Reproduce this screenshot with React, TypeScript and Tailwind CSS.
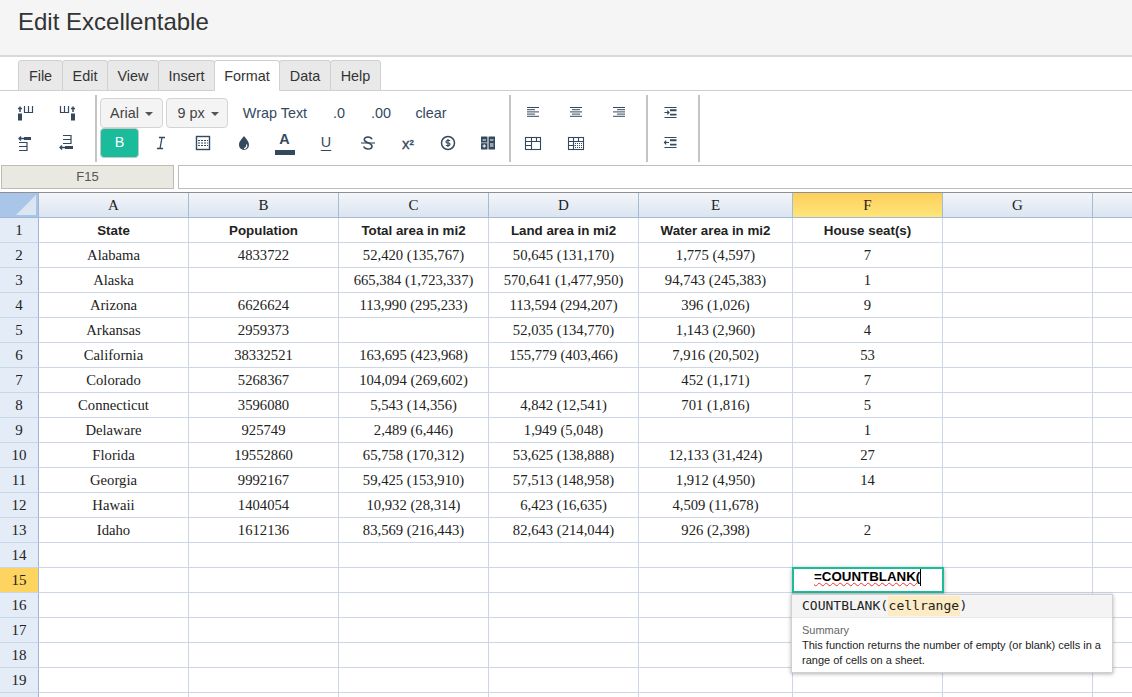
import React from 'react';

const MENUS = ['File', 'Edit', 'View', 'Insert', 'Format', 'Data', 'Help'];
const MENU_WIDTHS = ['w-[45px]', 'w-[46px]', 'w-[52px]', 'w-[57px]', 'w-[66px]', 'w-[52px]', 'w-[51px]'];

const COLUMNS = [
  { name: 'A', width: 'w-[150px]' },
  { name: 'B', width: 'w-[150px]' },
  { name: 'C', width: 'w-[150px]' },
  { name: 'D', width: 'w-[150px]' },
  { name: 'E', width: 'w-[154px]' },
  { name: 'F', width: 'w-[150px]' },
  { name: 'G', width: 'w-[150px]' },
  { name: '', width: 'w-[150px]' },
];

const ROWS: string[][] = [
  ['State', 'Population', 'Total area in mi2', 'Land area in mi2', 'Water area in mi2', 'House seat(s)'],
  ['Alabama', '4833722', '52,420 (135,767)', '50,645 (131,170)', '1,775 (4,597)', '7'],
  ['Alaska', '', '665,384 (1,723,337)', '570,641 (1,477,950)', '94,743 (245,383)', '1'],
  ['Arizona', '6626624', '113,990 (295,233)', '113,594 (294,207)', '396 (1,026)', '9'],
  ['Arkansas', '2959373', '', '52,035 (134,770)', '1,143 (2,960)', '4'],
  ['California', '38332521', '163,695 (423,968)', '155,779 (403,466)', '7,916 (20,502)', '53'],
  ['Colorado', '5268367', '104,094 (269,602)', '', '452 (1,171)', '7'],
  ['Connecticut', '3596080', '5,543 (14,356)', '4,842 (12,541)', '701 (1,816)', '5'],
  ['Delaware', '925749', '2,489 (6,446)', '1,949 (5,048)', '', '1'],
  ['Florida', '19552860', '65,758 (170,312)', '53,625 (138,888)', '12,133 (31,424)', '27'],
  ['Georgia', '9992167', '59,425 (153,910)', '57,513 (148,958)', '1,912 (4,950)', '14'],
  ['Hawaii', '1404054', '10,932 (28,314)', '6,423 (16,635)', '4,509 (11,678)', ''],
  ['Idaho', '1612136', '83,569 (216,443)', '82,643 (214,044)', '926 (2,398)', '2'],
  [],
  [],
  [],
  [],
  [],
  [],
  [],
];

const Ico: React.FC<{ children: React.ReactNode }> = ({ children }) => (
  <svg width="18" height="18" viewBox="0 0 18 18" fill="none" stroke="#34495e" strokeWidth="1">
    {children}
  </svg>
);

const ToolBtn: React.FC<{ children: React.ReactNode; w?: string }> = ({ children, w = 'w-[41px]' }) => (
  <button className={`${w} h-[30px] flex items-center justify-center shrink-0`}>{children}</button>
);

const Icons = {
  colBefore: (
    <Ico>
      <path d="M7.500 2v7M11.500 2v7M15.500 2v7M7 8.500h9" strokeWidth="1.200" />
      <path d="M3 8V2.500M1 4.500h4" strokeWidth="1.500" />
      <rect x="1" y="9.500" width="4" height="7" fill="#34495e" stroke="none" />
    </Ico>
  ),
  colAfter: (
    <Ico>
      <path d="M2.500 2v7M6.500 2v7M10.500 2v7M2 8.500h9" strokeWidth="1.200" />
      <path d="M15 8V2.500M13 4.500h4" strokeWidth="1.500" />
      <rect x="13" y="9.500" width="4" height="7" fill="#34495e" stroke="none" />
    </Ico>
  ),
  rowAbove: (
    <Ico>
      <path d="M2 8.500h8M2 12.500h8M2 16.500h8M10 8v9" strokeWidth="1.200" />
      <path d="M2 4.500h5M4 2.500l-2 2 2 2" strokeWidth="1.300" />
      <rect x="7" y="3" width="7" height="3" fill="#34495e" stroke="none" />
    </Ico>
  ),
  rowBelow: (
    <Ico>
      <path d="M5 1.500h8M5 5.500h8M5 9.500h8M13 1v9" strokeWidth="1.200" />
      <path d="M2 13.500h5M4 11.500l-2 2 2 2" strokeWidth="1.300" />
      <rect x="7" y="12" width="8" height="3" fill="#34495e" stroke="none" />
    </Ico>
  ),
  italic: (
    <Ico>
      <path d="M7 3.500h6M5 14.500h6M10 3.500l-2 11" strokeWidth="1.300" />
    </Ico>
  ),
  borders: (
    <Ico>
      <rect x="2.500" y="2.500" width="13" height="13" strokeWidth="1.400" />
      <path d="M4 6.500h10M4 9h10M4 11.500h10" strokeDasharray="2 1" strokeWidth="1.200" />
    </Ico>
  ),
  drop: (
    <Ico>
      <path d="M9 2c2 3 5 5 5 9a5 5 0 0 1-10 0c0-4 3-6 5-9z" fill="#34495e" stroke="none" />
      <path d="M11.500 10.500a2.800 2.800 0 0 1-2.500 4" stroke="#fff" strokeWidth="1.200" />
    </Ico>
  ),
  strike: (
    <Ico>
      <path d="M13 5.300C12.300 3.700 10.800 3 9 3 7 3 5.300 4 5.300 5.700 5.300 9 13 8.500 13 12.200 13 14 11.200 15 9 15c-2 0-3.500-.8-4.300-2.500" strokeWidth="1.600" />
      <path d="M2 9h14" strokeWidth="1.100" />
    </Ico>
  ),
  dollar: (
    <Ico>
      <circle cx="9" cy="9" r="6.500" strokeWidth="1.500" />
      <path d="M11.200 6.500H8a1.300 1.300 0 0 0 0 2.500h2a1.300 1.300 0 0 1 0 2.500H6.800M9 5v8" strokeWidth="1.200" />
    </Ico>
  ),
  calc: (
    <Ico>
      <rect x="2" y="2.500" width="6.500" height="13" rx="0.500" fill="#34495e" stroke="none" />
      <rect x="9.500" y="2.500" width="6.500" height="13" rx="0.500" fill="#34495e" stroke="none" />
      <path d="M3.500 6h3.500M11 6h3.500M11 10h3.500M11 12h3.500M3.500 12h3.500M5.200 10.300v3.400" stroke="#fff" strokeWidth="1" />
      <path d="M2 8.800h6.500" stroke="#fff" strokeWidth="0.600" />
    </Ico>
  ),
  alignLeft: (
    <Ico>
      <path d="M3 3.500h12M3 5.700h8M3 7.900h12M3 10.100h8M3 12.300h12" strokeWidth="1" />
    </Ico>
  ),
  alignCenter: (
    <Ico>
      <path d="M3 3.500h12M5 5.700h8M3 7.900h12M5 10.100h8M3 12.300h12" strokeWidth="1" />
    </Ico>
  ),
  alignRight: (
    <Ico>
      <path d="M3 3.500h12M7 5.700h8M3 7.900h12M7 10.100h8M3 12.300h12" strokeWidth="1" />
    </Ico>
  ),
  merge: (
    <Ico>
      <rect x="1.500" y="3.500" width="15" height="12" strokeWidth="1.100" />
      <path d="M1.500 7.500h15M1.500 11.500h6M7.500 3.500v12M12.500 3.500v4" strokeWidth="1.100" />
    </Ico>
  ),
  split: (
    <Ico>
      <rect x="1.500" y="3.500" width="15" height="12" strokeWidth="1.100" />
      <path d="M1.500 7.500h15M1.500 11.500h6M6.500 3.500v12M11.500 3.500v4" strokeWidth="1.100" />
      <path d="M8 9.500h7M8 11.500h7M8 13.500h7" strokeDasharray="1 1" strokeWidth="1" />
    </Ico>
  ),
  indent: (
    <Ico>
      <path d="M3.500 3.500h12M3.500 13.500h12" strokeWidth="1.200" />
      <path d="M3.500 8.500h4.500M6.300 6.700L8 8.500l-1.700 1.800" strokeWidth="1.200" />
      <path d="M9 6.200h6.500M9 10.600h6.500" strokeWidth="1.900" />
    </Ico>
  ),
  outdent: (
    <Ico>
      <path d="M3.500 3.500h12M3.500 13.500h12" strokeWidth="1.200" />
      <path d="M3.500 8.500h4.500M5.200 6.700L3.500 8.500l1.700 1.800" strokeWidth="1.200" />
      <path d="M9 6.200h6.500M9 10.600h6.500" strokeWidth="1.900" />
    </Ico>
  ),
};

const Caret = () => (
  <span className="inline-block ml-[6px] w-0 h-0 border-x-[4px] border-x-transparent border-t-[4px] border-t-[#555]" />
);

const Divider = () => <div className="w-[2px] h-[67px] mt-[4px] bg-[#c4c4c4] shrink-0" />;

const TextBtn: React.FC<{ label: string; w: string }> = ({ label, w }) => (
  <button className={`${w} h-[30px] pt-[2px] flex items-center justify-center text-[14.4px] text-[#34495e] shrink-0`}>{label}</button>
);

const App: React.FC = () => {
  return (
    <div className="w-[1132px] h-[697px] overflow-hidden bg-white font-['Liberation_Sans',Arial,sans-serif]">
      {/* page title */}
      <div className="h-[57px] bg-[#f5f5f5] border-b-2 border-[#d9d9d9] pl-[18px] pt-[7px]">
        <h1 className="text-[24px] leading-[30px] text-[#333]">Edit Excellentable</h1>
      </div>

      {/* menu tabs */}
      <div className="h-[34px] pt-[3px] pl-[18px] flex border-b border-[#cfcfcf]">
        {MENUS.map((m, i) => (
          <div
            key={m}
            className={`${MENU_WIDTHS[i]} h-[31px] pt-[2px] flex items-center justify-center text-[14.4px] text-[#333] border border-[#d0d0d0] rounded-t-[3px] -mr-[1px] ${
              m === 'Format' ? 'bg-white border-b-white z-10' : 'bg-[#e9e9e9]'
            }`}
          >
            {m}
          </div>
        ))}
      </div>

      {/* toolbar */}
      <div className="h-[71px] flex items-start pl-[5px]">
        <div className="w-[90px] mt-[7px] flex flex-wrap">
          <ToolBtn>{Icons.colBefore}</ToolBtn>
          <ToolBtn>{Icons.colAfter}</ToolBtn>
          <ToolBtn>{Icons.rowAbove}</ToolBtn>
          <ToolBtn>{Icons.rowBelow}</ToolBtn>
        </div>
        <Divider />
        <div className="w-[412px] mt-[7px] pl-[3px] flex flex-col">
          <div className="flex items-center h-[30px]">
            <button className="w-[63px] h-[30px] pt-[2px] flex items-center justify-center text-[14.4px] text-[#444] bg-[#f4f4f4] border border-[#d4d4d4] rounded-[4px]">
              Arial
              <Caret />
            </button>
            <button className="ml-[3px] w-[62px] h-[30px] pt-[2px] pl-[2px] flex items-center justify-center text-[14.4px] text-[#444] bg-[#f4f4f4] border border-[#d4d4d4] rounded-[4px]">
              9 px
              <Caret />
            </button>
            <TextBtn label="Wrap Text" w="w-[94px]" />
            <TextBtn label=".0" w="w-[34px]" />
            <TextBtn label=".00" w="w-[50px]" />
            <TextBtn label="clear" w="w-[50px]" />
          </div>
          <div className="flex items-center h-[30px]">
            <button className="w-[39px] h-[30px] flex items-center justify-center bg-[#1abc9c] border border-[#c8c8c8] rounded-[4px] text-white text-[14.4px]">
              B
            </button>
            <ToolBtn w="w-[43px]">{Icons.italic}</ToolBtn>
            <ToolBtn>{Icons.borders}</ToolBtn>
            <ToolBtn>{Icons.drop}</ToolBtn>
            <div className="w-[41px] h-[30px] flex flex-col items-center shrink-0">
              <span className="text-[14.4px] leading-[16px] mt-[3px] font-bold text-[#34495e]">A</span>
              <span className="w-[20px] h-[5px] bg-[#34495e] mt-[3px]" />
            </div>
            <ToolBtn w="w-[42px]">
              <span className="text-[14.4px] underline underline-offset-[3px] text-[#34495e]">U</span>
            </ToolBtn>
            <ToolBtn>{Icons.strike}</ToolBtn>
            <ToolBtn w="w-[40px]">
              <span className="text-[15px] text-[#34495e] leading-none [-webkit-text-stroke:0.3px_#34495e]">
                x<sup className="text-[8px] font-bold">2</sup>
              </span>
            </ToolBtn>
            <ToolBtn w="w-[40px]">{Icons.dollar}</ToolBtn>
            <ToolBtn w="w-[40px]">{Icons.calc}</ToolBtn>
          </div>
        </div>
        <Divider />
        <div className="w-[135px] mt-[7px] flex flex-wrap">
          <ToolBtn w="w-[43px]">{Icons.alignLeft}</ToolBtn>
          <ToolBtn w="w-[43px]">{Icons.alignCenter}</ToolBtn>
          <ToolBtn w="w-[43px]">{Icons.alignRight}</ToolBtn>
          <ToolBtn w="w-[43px]">{Icons.merge}</ToolBtn>
          <ToolBtn w="w-[43px]">{Icons.split}</ToolBtn>
        </div>
        <Divider />
        <div className="w-[50px] mt-[7px] pl-[1px] flex flex-col">
          <ToolBtn>{Icons.indent}</ToolBtn>
          <ToolBtn>{Icons.outdent}</ToolBtn>
        </div>
        <Divider />
      </div>

      {/* name box and formula bar */}
      <div className="h-[30px] pt-[3px] pl-[1px] flex overflow-hidden">
        <div className="w-[173px] h-[24px] shrink-0 bg-[#e9e9e1] border border-[#bdbdb5] flex items-center justify-center text-[13px] text-[#555]">
          F15
        </div>
        <div className="ml-[4px] w-[1000px] h-[24px] shrink-0 bg-white border border-[#bdbdbd]" />
      </div>

      {/* sheet */}
      <div className="relative border-t border-[#8f8f8f] font-['Liberation_Serif',serif]">
        <div className="flex h-[25px]">
          <div className="w-[39px] shrink-0 bg-[#a9c5e8] border-r border-b border-[#9db7d4] relative overflow-hidden">
            <div className="absolute right-[2px] bottom-[2px] w-0 h-0 border-l-[20px] border-l-transparent border-b-[20px] border-b-[#dce6f3]" />
          </div>
          {COLUMNS.map((c) => (
            <div
              key={c.name}
              className={`${c.width} shrink-0 flex items-center justify-center text-[15px] text-[#222] border-r border-b border-[#a3bbd6] ${
                c.name === 'F'
                  ? 'bg-gradient-to-b from-[#fdcf5a] to-[#ffe57a]'
                  : 'bg-gradient-to-b from-[#f3f6fa] to-[#dbe4f0]'
              }`}
            >
              {c.name}
            </div>
          ))}
        </div>
        {ROWS.map((row, r) => (
          <div key={r} className="flex h-[25px]">
            <div
              className={`w-[39px] shrink-0 flex items-center justify-center text-[15px] text-[#222] border-r border-b border-r-[#9db7d4] border-b-[#c9d6e6] ${
                r === 14 ? 'bg-[#fdd45f]' : 'bg-[#e4ecf7]'
              } ${r === 0 ? 'pt-[1px]' : ''}`}
            >
              {r < 19 ? r + 1 : ''}
            </div>
            {COLUMNS.map((c, i) => (
              <div
                key={c.name}
                className={`${c.width} shrink-0 flex items-center justify-center border-r border-b border-[#ccd6e6] text-[#222] whitespace-nowrap ${
                  r === 0 ? "pt-[1px] font-['Liberation_Sans',Arial,sans-serif] font-bold text-[13.33px]" : 'text-[14.67px]'
                }`}
              >
                {row[i]}
              </div>
            ))}
          </div>
        ))}

        {/* cell editor */}
        <div className="absolute left-[792px] top-[374px] w-[152px] h-[26px] bg-white border-[2px] border-[#1abc9c] shadow-[0_1px_4px_rgba(0,0,0,0.35)] flex items-start pl-[20px] font-['Liberation_Sans',Arial,sans-serif] font-bold text-[13.33px] leading-[16px] text-black z-10">
          <span className="underline decoration-wavy decoration-[#e33] decoration-1">=COUNTBLANK(</span>
          <span className="w-[1px] h-[17px] bg-black" />
        </div>

        {/* function hint */}
        <div className="absolute left-[791px] top-[401px] w-[322px] h-[79px] bg-white border border-[#d0d0d0] shadow-[0_1px_4px_rgba(0,0,0,0.3)] z-10 font-['Liberation_Sans',Arial,sans-serif]">
          <div className="h-[23px] bg-[#f4f4f4] border-b border-[#e8e8e8] pl-[10px] flex items-center font-['DejaVu_Sans_Mono',monospace] text-[13px] text-[#222]">
            COUNTBLANK(<span className="bg-[#fdebc4] px-[0.5px]">cellrange</span>)
          </div>
          <div className="pl-[10px] pr-[8px] pt-[5px] text-[11px] leading-[15px]">
            <div className="text-[#666]">Summary</div>
            <div className="text-[#222]">This function returns the number of empty (or blank) cells in a range of cells on a sheet.</div>
          </div>
        </div>
      </div>
    </div>
  );
};

export default App;
